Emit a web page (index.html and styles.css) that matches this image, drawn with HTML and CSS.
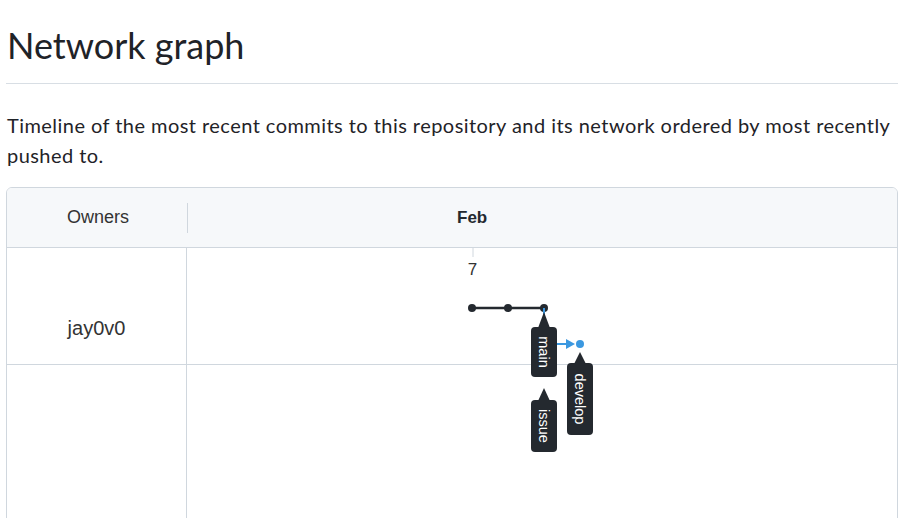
FILE: index.html
```html
<!DOCTYPE html>
<html lang="en">
<head>
<meta charset="UTF-8">
<meta name="viewport" content="width=device-width, initial-scale=1.0">
<title>Network graph</title>
<link rel="stylesheet" href="styles.css">
</head>
<body>

<div class="page">
<div class="subhead">
<h2 class="subhead-heading">Network graph</h2>
</div>

<p class="lead">Timeline of the most recent commits to this repository and its network ordered by most recently pushed to.</p>

<div class="network">
<div class="network-head">
<div class="owners-head">Owners</div>
<div class="head-divider"></div>
<div class="months"><span class="month">Feb</span></div>
</div>

<div class="network-body">
<div class="row">
<div class="owner">jay0v0</div>
<div class="lane"></div>
</div>
<div class="row row-empty">
<div class="owner"></div>
<div class="lane"></div>
</div>

<!-- graph is drawn over the rows, origin = top left of the body -->
<svg class="graph" xmlns="http://www.w3.org/2000/svg">
<line class="tick" x1="466" y1="0" x2="466" y2="9"/>
<text class="day" x="465.5" y="27">7</text>

<line class="branch" x1="465" y1="60" x2="537" y2="60"/>
<circle class="commit" cx="465" cy="60" r="4"/>
<circle class="commit" cx="501" cy="60" r="4"/>
<circle class="commit" cx="537" cy="60" r="4"/>

<polyline class="branch-blue" points="537,60 537,96 560,96"/>
<polygon class="arrow-blue" points="559,91 568,96 559,101"/>
<circle class="commit-blue" cx="573" cy="96" r="4"/>

<g class="ref">
<polygon points="537,64 531,80 543,80"/>
<rect x="524" y="79" width="26" height="50" rx="4"/>
<text transform="translate(537 104) rotate(90)">main</text>
</g>

<g class="ref">
<polygon points="573,104 567,116 579,116"/>
<rect x="560" y="115" width="26" height="72" rx="4"/>
<text transform="translate(573 151) rotate(90)">develop</text>
</g>

<g class="ref">
<polygon points="537,140 531,153 543,153"/>
<rect x="524" y="152" width="26" height="52" rx="4"/>
<text transform="translate(537 178) rotate(90)">issue</text>
</g>
</svg>
</div>
</div>
</div>

</body>
</html>
```

FILE: styles.css
```css
body {
margin: 0;
font-family: Lato, "Noto Sans", sans-serif;
color: #1f2328;
background: #fff;
}
.page {
margin-left: 6px;
width: 892px;
padding-top: 23px;
}
.subhead {
padding-bottom: 15px;
border-bottom: 1px solid #d8dee4;
}
.subhead-heading {
margin: 0 0 0 1px;
font-size: 36px;
font-weight: 400;
line-height: 45px;
}
.lead {
margin: 26px 0 17px 1px;
font-size: 20px;
line-height: 30px;
letter-spacing: 0.45px;
}
.network {
border: 1px solid #d0d7de;
border-radius: 6px;
overflow: hidden;
font-family: "Liberation Sans", Arial, sans-serif;
color: #333;
}
.network-head {
display: flex;
align-items: center;
height: 59px;
background: #f6f8fa;
border-bottom: 1px solid #d0d7de;
}
.owners-head {
width: 180px;
padding-left: 2px;
box-sizing: border-box;
text-align: center;
font-size: 18px;
}
.head-divider {
width: 1px;
height: 30px;
background: #d0d7de;
}
.months {
flex: 1;
padding-left: 269px;
}
.month {
font-size: 17px;
font-weight: bold;
color: #24292f;
}
.network-body {
position: relative;
}
.row {
display: flex;
height: 116px;
border-bottom: 1px solid #d0d7de;
}
.row-empty {
height: 200px;
border-bottom: none;
}
.owner {
width: 180px;
border-right: 1px solid #d0d7de;
padding-top: 68px;
box-sizing: border-box;
text-align: center;
font-size: 20px;
line-height: 24px;
}
.lane {
flex: 1;
}
.graph {
position: absolute;
left: 0;
top: 0;
width: 100%;
height: 100%;
overflow: visible;
}
.tick {
stroke: #d0d7de;
stroke-width: 1;
}
.day {
font-family: "Liberation Sans", Arial, sans-serif;
font-size: 17px;
fill: #333;
text-anchor: middle;
}
.branch {
stroke: #24292f;
stroke-width: 2.5;
}
.commit {
fill: #24292f;
}
.branch-blue {
fill: none;
stroke: #3b98e0;
stroke-width: 2;
}
.arrow-blue,
.commit-blue {
fill: #3b98e0;
}
.ref polygon,
.ref rect {
fill: #24292f;
}
.ref text {
font-family: "Liberation Sans", Arial, sans-serif;
font-size: 14.5px;
fill: #fff;
text-anchor: middle;
dominant-baseline: central;
}
```
